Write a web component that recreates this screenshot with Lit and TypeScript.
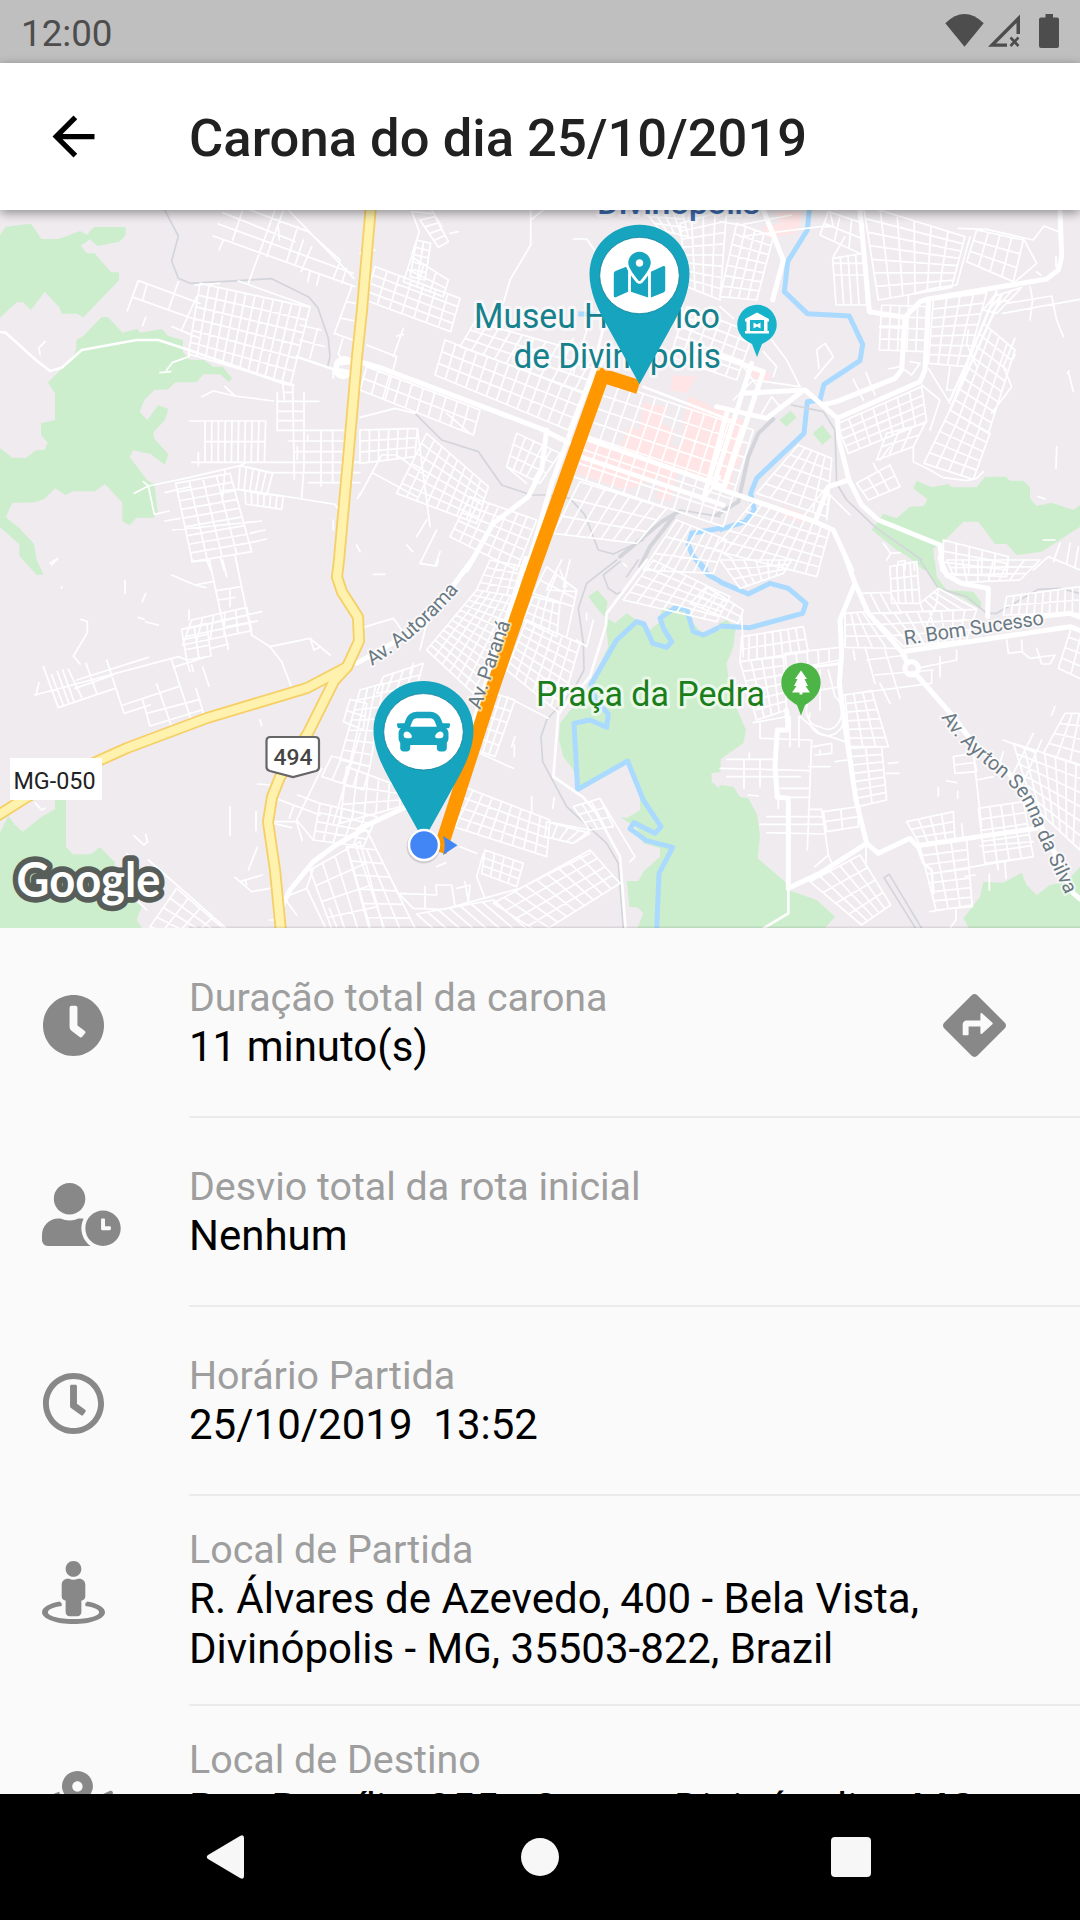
import { LitElement, html, svg, css } from "lit";
import { customElement, property } from "lit/decorators.js";

/** Icon outlines with the viewBox width each was drawn for (height is always 512). */
const ICONS: Record<string, { w: number; d: string }> = {
  clock: {
    w: 512,
    d: "M256,8C119,8,8,119,8,256S119,504,256,504,504,393,504,256,393,8,256,8Zm92.49,313h0l-20,25a16,16,0,0,1-22.49,2.5h0l-67-49.72a40,40,0,0,1-15-31.23V112a16,16,0,0,1,16-16h32a16,16,0,0,1,16,16V256l58,42.5A16,16,0,0,1,348.49,321Z",
  },
  userClock: {
    w: 640,
    d: "M496 224c-79.6 0-144 64.4-144 144s64.4 144 144 144 144-64.4 144-144-64.4-144-144-144zm64 150.3c0 5.3-4.4 9.7-9.7 9.7h-60.6c-5.3 0-9.7-4.4-9.7-9.7v-76.6c0-5.3 4.4-9.7 9.7-9.7h12.6c5.3 0 9.7 4.4 9.7 9.7V352h38.3c5.3 0 9.7 4.4 9.7 9.7v12.6zM320 368c0-27.8 6.7-54.1 18.2-77.5-8-1.5-16.2-2.5-24.6-2.5h-16.7c-22.2 10.2-46.9 16-72.9 16s-50.6-5.8-72.9-16h-16.7C60.2 288 0 348.2 0 422.4V464c0 26.5 21.5 48 48 48h347.1c-45.3-31.9-75.1-84.5-75.1-144zm-96-112c70.7 0 128-57.3 128-128S294.7 0 224 0 96 57.3 96 128s57.3 128 128 128z",
  },
  clockOutline: {
    w: 512,
    d: "M256 8C119 8 8 119 8 256s111 248 248 248 248-111 248-248S393 8 256 8zm0 448c-110.5 0-200-89.5-200-200S145.5 56 256 56s200 89.5 200 200-89.5 200-200 200zm61.8-104.4l-84.9-61.7c-3.1-2.3-4.9-5.9-4.9-9.7V116c0-6.6 5.4-12 12-12h32c6.6 0 12 5.4 12 12v141.7l66.8 48.6c5.4 3.9 6.5 11.4 2.6 16.8L334.6 349c-3.9 5.3-11.4 6.5-16.8 2.6z",
  },
  streetView: {
    w: 512,
    d: "M367.9 329.76c-4.62 5.3-9.78 10.1-15.9 13.65v22.94c66.52 9.34 112 28.05 112 49.65 0 30.93-93.12 56-208 56S48 446.93 48 416c0-21.6 45.48-40.3 112-49.65v-22.94c-6.12-3.55-11.28-8.35-15.9-13.65C58.87 345.34 0 378.05 0 416c0 53.02 114.62 96 256 96s256-42.98 256-96c0-37.95-58.87-70.66-144.1-86.24zM256 128c35.35 0 64-28.65 64-64S291.35 0 256 0s-64 28.65-64 64 28.65 64 64 64zm-64 192v96c0 17.67 14.33 32 32 32h64c17.67 0 32-14.33 32-32v-96c17.67 0 32-14.33 32-32v-96c0-26.51-21.49-48-48-48h-11.8c-11.07 5.03-23.26 8-36.2 8s-25.13-2.97-36.2-8H208c-26.51 0-48 21.49-48 48v96c0 17.67 14.33 32 32 32z",
  },
  mapMarked: {
    w: 576,
    d: "M288 0c-69.59 0-126 56.41-126 126 0 56.26 82.35 158.8 113.9 196.02 6.39 7.54 17.82 7.54 24.2 0C331.65 284.8 414 182.26 414 126 414 56.41 357.59 0 288 0zm0 168c-23.2 0-42-18.8-42-42s18.8-42 42-42 42 18.8 42 42-18.8 42-42 42zM20.12 215.95A32.006 32.006 0 0 0 0 245.66v250.32c0 11.32 11.43 19.06 21.94 14.86L160 448V214.92c-8.84-15.98-16.07-31.54-21.25-46.42L20.12 215.95zM288 359.67c-14.07 0-27.38-6.18-36.51-16.96-19.66-23.2-40.57-49.62-59.49-76.72v182l192 64V266c-18.92 27.09-39.82 53.52-59.49 76.72-9.13 10.77-22.44 16.95-36.51 16.95zm266.06-198.51L416 224v288l139.88-55.95A31.996 31.996 0 0 0 576 426.34V176.02c0-11.32-11.43-19.06-21.94-14.86z",
  },
  directions: {
    w: 512,
    d: "M502.61 233.32L278.68 9.39c-12.52-12.52-32.83-12.52-45.36 0L9.39 233.32c-12.52 12.53-12.52 32.83 0 45.36l223.93 223.93c12.52 12.53 32.83 12.53 45.36 0l223.93-223.93c12.52-12.53 12.52-32.83 0-45.36zm-100.98 12.56l-84.21 77.73c-5.12 4.73-13.43 1.1-13.43-5.88V264h-96v64c0 4.42-3.58 8-8 8h-32c-4.42 0-8-3.58-8-8v-80c0-17.67 14.33-32 32-32h112v-53.73c0-6.97 8.3-10.61 13.43-5.88l84.21 77.73c3.43 3.17 3.43 8.59 0 11.76z",
  },
  car: {
    w: 512,
    d: "M499.99 176h-59.87l-16.64-41.6C406.38 91.63 365.57 64 319.5 64h-127c-46.06 0-86.88 27.63-103.99 70.4L71.87 176H12.01C4.2 176-1.53 183.34.37 190.91l6 24C7.7 220.25 12.5 224 18.01 224h20.07C24.65 235.73 16 252.78 16 272v48c0 16.12 6.16 30.67 16 41.93V416c0 17.67 14.33 32 32 32h32c17.67 0 32-14.33 32-32v-32h256v32c0 17.67 14.33 32 32 32h32c17.67 0 32-14.33 32-32v-54.07c9.84-11.25 16-25.8 16-41.93v-48c0-19.22-8.65-36.27-22.07-48H494c5.51 0 10.31-3.75 11.64-9.09l6-24c1.89-7.57-3.84-14.91-11.65-14.91zm-352.06-17.83c7.29-18.22 24.94-30.17 44.57-30.17h127c19.63 0 37.28 11.95 44.57 30.17L384 208H128l19.93-49.83zM96 319.8c-19.2 0-32-12.76-32-31.9S76.8 256 96 256s48 28.71 48 47.85-28.8 15.95-48 15.95zm320 0c-19.2 0-48 3.19-48-15.95S396.8 256 416 256s32 12.76 32 31.9-12.8 31.9-32 31.9z",
  },
};

/** A block of streets: corners clockwise from top left, then columns and rows. */
type Block = [number, number, number, number, number, number, number, number, number, number];

function blockPath([ax, ay, bx, by, cx, cy, dx, dy, n, m]: Block): string {
  const mix = (p: number, q: number, t: number) => Math.round((p + (q - p) * t) * 10) / 10;
  let out = "";
  for (let i = 0; i <= n; i++) {
    const t = i / n;
    out += `M${mix(ax, bx, t)} ${mix(ay, by, t)}L${mix(dx, cx, t)} ${mix(dy, cy, t)}`;
  }
  for (let j = 0; j <= m; j++) {
    const t = j / m;
    out += `M${mix(ax, dx, t)} ${mix(ay, dy, t)}L${mix(bx, cx, t)} ${mix(by, cy, t)}`;
  }
  return out;
}

interface Tile {
  x: number;
  y: number;
  park?: string;
  pink?: string;
  water?: string;
  rail?: string;
  railWide?: string;
  blocks: Block[];
  minor: string;
  mid?: string;
  major?: string;
}

/** Map tiles; every tile uses three units per screen pixel. */
const TILES: Tile[] = [
  {
    x: 0,
    y: 200,
    park:
      "M0 105L17 80L93 71L124 117H176L240 93L261 104L282 81H377V105L358 125L292 138L270 118L242 137L261 160H284L333 217H357V241L250 352L230 341H186L178 322L134 275L93 330L69 307H50L0 353Z" +
      "M304 352H324L368 398L410 387L422 398L485 387L505 408L549 421V457L570 479L612 480L640 500H668L696 535L687 546L660 523H610L590 547H526L505 568L463 570L433 600L419 636L442 660L475 615L505 627L495 660L460 697L462 715L505 763L495 795L452 762L399 751L389 772L443 842L463 852L473 935L460 953H409L389 976L367 964V908L315 852L285 874H218L197 885L165 865L134 896L105 907L37 909L17 951L58 985L102 1031L110 1080L131 1124H110L58 1067V1033L0 982V744L37 773H79L108 751L134 749L143 728L123 705V670L165 660V580L144 547L187 505L222 463L229 445V420L250 408Z",
    rail: "M494 30L535 108L515 183L535 235L570 250L815 236L925 290L953 322L985 415L990 470L983 500",
    blocks: [
      [600, 250, 930, 322, 872, 552, 565, 462, 12, 6],
      [615, 663, 797, 663, 793, 787, 615, 787, 9, 2],
      [720, 797, 818, 820, 800, 885, 715, 868, 5, 1],
      [735, 870, 850, 890, 845, 928, 737, 912, 6, 1],
      [527, 850, 690, 820, 755, 1055, 577, 1085, 4, 9],
    ],
    minor:
      "M668 38L885 125M655 72L1060 220M640 108L1065 260M750 30L925 95L1020 180M865 30L1062 235M728 30L698 120M825 30L745 250M850 30L800 170M893 80L860 185M910 120L885 195M935 140L903 215M1020 185L1000 235M1040 205L1025 250M670 120L657 150M835 80L838 120M930 215L923 245M958 225L950 255" +
      "M415 242L600 310M400 292L590 360M415 242L382 332M535 245L505 330M440 255L428 300M516 380L600 415M590 290L545 390M715 243L930 320M900 375L963 390M900 420L973 440M953 385L930 475M585 255L660 250M437 352L428 377" +
      "M567 450V470L518 487L500 510M480 518L512 515M120 463L117 443L135 425M605 590L640 573L705 588L820 603M675 560L705 588" +
      "M848 550L853 600M878 555L883 838M832 577V690M912 577V800L905 893M830 604H957M835 634H912M835 662H912M830 691H1045M855 577H880" +
      "M568 663H797M575 787H1080M595 757V797M865 723H1040M885 755H1040M820 818H1080M925 848H1080M963 691V858M998 691V850M923 705V722M892 740V778" +
      "M445 858L570 832L720 797L815 818M403 880L445 858L463 943L507 933M430 845L445 858M720 797L740 787M667 872L715 868L850 888L1005 913L1020 935" +
      "M495 878L570 860M495 963L540 955M517 990L785 963M750 1000L795 990M750 1028L800 1017M620 1080L632 1110M660 1070L672 1110M705 1065L715 1110M675 812L667 900" +
      "M1000 960V990M155 1095L173 1075M1000 505V535M1055 260L1003 400L1058 420M1040 305L1065 310M1025 355L1060 362M1030 410L1015 460L1025 480M1080 1055L1070 1035M1080 880L1073 895",
    mid: "M0 396L17 398L105 478L150 513L185 503L245 450L410 420H475L560 448L850 550L880 555M890 470L1000 508",
    major: "M1010 500A22 18 0 0 1 1055 490M1010 500A22 18 0 0 0 1050 520M1015 490L1050 485M1020 512L1050 518",
  },
  {
    x: 360,
    y: 200,
    pink:
      "M850 608L925 622L905 670L945 690L930 740H960L985 590L1030 605L1080 640L1150 660L1110 880L1040 850L950 815L930 905L890 895L905 830L800 870L650 820L680 710L780 745L805 680L840 690Z" +
      "M940 525L1010 530L980 580L930 570ZM1210 80L1320 60L1310 100L1220 115ZM1170 505L1230 520L1220 545L1165 530Z",
    water: "M1082 985L995 1000L985 1035L1000 1070L1040 1110M655 342H710",
    rail: "M165 640L245 720L355 755L425 855L515 885H560L630 895L675 945L715 1050L760 1062L850 1020M960 930L1080 950",
    railWide: "M955 935L905 965L780 1070M940 950L870 1040L840 1100",
    blocks: [
      [180, 60, 225, 50, 265, 125, 235, 142, 1, 4],
      [170, 120, 212, 130, 195, 240, 150, 230, 2, 5],
      [45, 200, 300, 295, 272, 395, 15, 300, 7, 4],
      [155, 170, 265, 240, 250, 290, 130, 245, 3, 2],
      [255, 420, 670, 580, 625, 690, 225, 525, 13, 3],
      [345, 365, 735, 475, 680, 580, 300, 440, 11, 3],
      [20, 500, 360, 630, 340, 705, 0, 570, 10, 2],
      [0, 690, 172, 685, 165, 770, 0, 790, 6, 3],
      [200, 700, 385, 860, 350, 970, 110, 880, 8, 6],
      [330, 890, 530, 960, 470, 1110, 270, 1010, 7, 5],
      [470, 700, 600, 760, 540, 850, 440, 800, 5, 3],
      [740, 545, 1180, 690, 1090, 980, 640, 830, 12, 7],
      [980, 320, 1180, 400, 1130, 540, 930, 470, 6, 5],
      [660, 845, 920, 925, 830, 1030, 580, 1000, 7, 3],
      [850, 30, 965, 30, 985, 110, 900, 90, 4, 3],
      [960, 70, 1100, 30, 1080, 300, 980, 260, 4, 8],
      [950, 960, 1100, 1020, 1060, 1120, 850, 1110, 7, 3],
    ],
    minor:
      "M155 35L178 95L155 165M215 30L245 80M155 35L215 40M270 100L295 95M130 385L100 470M110 408L130 403M20 435L110 470L75 600M0 652L105 625L165 640M172 685L210 980M40 820L170 890M0 885L65 765L110 765L200 830" +
      "M512 30V135L450 240L430 310M550 30L512 60M640 117H680L710 160M640 415L610 470M690 360L640 520M200 960L170 1010M230 990L180 1090L225 1098L240 1055M140 1035L158 1055M440 800L500 850M260 640L330 700M0 160L45 150",
    mid: "M735 365L700 500M1030 900L1080 830M850 560L1110 660",
    major: "M-10 483L60 503L540 685L640 735M655 768L1090 915M690 720L1090 860M700 510L575 850L500 1110M560 690L545 810L505 890L400 970L320 1110M1100 640L1030 900",
  },
  {
    x: 720,
    y: 200,
    park:
      "M178 660L212 632L230 652L200 680ZM278 700L307 675L335 710L307 735Z" +
      "M580 865L590 842L635 862L685 852L695 862H770L795 830H858L870 842H910L930 862V895L950 918L995 908L1060 930L1080 915V980L965 1055L890 1065L860 1032H825L775 965H730L660 1035L640 1045L645 1110H610L565 1070L530 1050L455 990L490 942L530 955L570 920L612 918L622 898Z",
    pink: "M130 100L180 70L170 35H240V75L170 110ZM85 505L150 525L145 545L90 530ZM190 920L260 945L250 970L185 945ZM-10 620L50 660L70 720L60 790L0 860Z",
    water: "M268 28L262 90L203 185L193 275L262 341L388 348L428 433L420 482L312 553L300 600L262 605L252 700L110 835L92 880L103 930L75 965L-2 990",
    rail: "M215 615L310 635L345 690L350 850L380 900L470 985L620 1090L640 1110",
    railWide: "M-10 945L55 905L85 770L115 700L160 657",
    blocks: [
      [430, 15, 735, 110, 695, 262, 475, 300, 6, 7],
      [325, 35, 430, 70, 430, 165, 300, 105, 3, 2],
      [338, 175, 430, 160, 440, 315, 348, 315, 4, 1],
      [770, 90, 910, 120, 880, 245, 740, 185, 4, 3],
      [640, 300, 800, 278, 740, 500, 625, 490, 4, 7],
      [485, 315, 620, 320, 615, 455, 478, 450, 5, 4],
      [790, 370, 885, 450, 805, 700, 690, 630, 4, 8],
      [690, 630, 810, 700, 760, 838, 612, 790, 4, 5],
      [350, 672, 605, 560, 620, 665, 385, 760, 7, 4],
      [500, 700, 615, 670, 580, 740, 470, 780, 3, 2],
      [410, 850, 510, 795, 540, 860, 445, 900, 3, 2],
      [235, 735, 335, 775, 320, 950, 110, 880, 5, 5],
      [100, 905, 330, 985, 290, 1130, -20, 1050, 9, 5],
      [50, 70, 160, 110, 110, 300, 0, 290, 4, 7],
      [670, 1020, 865, 1070, 860, 1130, 670, 1120, 5, 3],
      [820, 290, 905, 262, 830, 340, 790, 330, 3, 2],
    ],
    minor:
      "M340 190H430M345 225H435M340 170L375 110M0 65L60 75L215 45M60 110L300 80H340L330 35M715 85L800 88L940 120L972 78L1015 95M750 110L710 255L640 265L565 285V320M910 115L950 190L880 250M950 215L962 225" +
      "M848 340L1080 298M860 310L995 288L1010 360L1030 410M930 260L938 300L930 360M885 415L850 500L875 560L815 640M885 465L870 490M690 500L680 570H700M625 505L690 610M605 555L660 600L630 690M745 390L740 430L770 500" +
      "M400 538L430 600M438 518L465 585M580 740V785L620 805L670 833L740 842L770 835L790 815M510 740L480 780M460 790L470 810M330 885L390 945M330 885L320 960M320 860L250 950M290 450L315 430L340 470L285 535M290 450L297 505" +
      "M155 420L200 480L240 560M130 455L170 500L160 530M70 500L120 570M0 320L40 355M40 600L100 540L240 560M155 590L120 650M180 620L155 590M1045 515L1060 575M1042 520L1048 512M1010 740L1008 805M955 890L975 897M970 1020H1005M1008 170V200M940 1110L985 1070L1080 1110M1020 1030L1000 1085M1050 1030L1040 1090M1075 1040L1065 1100" +
      "M490 1030L512 1060L540 1058M512 1060L500 1080M530 1110L535 1085L555 1082V1110M583 1085V1110M10 1060L35 1075M505 507L540 500L575 525L600 490L570 485",
    mid: "M830 275L740 490L690 600M845 285L690 630M480 380H550",
    major:
      "M130 30L190 180L158 300M420 30L448 335L555 352L600 305L625 297L980 237L1015 210L1025 170L1020 30M626 300L615 510L600 545L352 655L255 570L65 580M555 350L545 510L525 535L350 605L305 615M352 655L357 720L387 840L425 915L475 960L660 1035L668 1110M387 840L325 860L285 965M-20 860L285 965L340 990L395 1110M-10 620L140 655L245 575M-10 465L130 515L10 870M95 490L-15 840",
  },
  {
    x: 0,
    y: 560,
    park: "M0 818L25 768L45 795L68 815L125 770L165 748V715H198V860L218 883H272L300 862L345 907L335 960L425 1040L410 1080L430 1110H0Z",
    blocks: [
      [575, 180, 740, 142, 755, 212, 548, 255, 5, 3],
      [545, 208, 620, 190, 633, 288, 560, 300, 2, 3],
      [530, 985, 670, 1105, 600, 1160, 450, 1100, 4, 4],
      [960, 730, 1130, 770, 1090, 860, 940, 840, 5, 4],
      [930, 930, 1080, 845, 1150, 1105, 1000, 1120, 4, 4],
      [1050, 418, 1100, 430, 1090, 510, 1030, 485, 1, 2],
      [995, 588, 1110, 620, 1090, 690, 965, 650, 4, 1],
    ],
    minor:
      "M628 0L685 268M708 0L755 225L810 260L930 235L990 285M810 260L845 305L873 378M930 235L942 270L962 260M785 155L650 185M772 183L680 200M668 0L680 50M515 45L585 75L637 65M585 75L618 83M650 92L722 80M655 120L705 112M690 90V140M575 5L630 0M567 150V180M633 265L685 252" +
      "M105 405L535 290L560 300L570 335M230 360L445 292M175 443L345 385M130 320L175 443M155 345L190 435M172 335L207 430M188 330L222 425M205 328L245 412M258 310L290 400M320 300L372 460L450 435M225 385L340 345M370 435L535 380M515 300L575 485M470 372L515 500M428 420L450 498L605 450M440 460L600 418M588 385L612 465M520 322L620 290" +
      "M243 178L262 185V218L220 288L240 312M375 62V100M437 100L427 125M415 172L432 178M437 186L475 195M608 322L627 378M575 315L580 335M117 368L108 405M690 740V825M768 755V812M772 862L745 930M402 827L432 855L443 845L437 823M705 952L755 995L810 985M720 965L787 945M735 960L740 975M780 480L785 497M105 728L125 750L135 745M185 80V85" +
      "M445 900L690 1115M380 880L400 897M400 1010L440 1050M772 672L815 675M835 718L960 765M1080 520L1000 790M965 625L890 780L940 840M820 785H890L907 842M893 705L960 730M820 790L875 803M850 1010L890 1065M870 1005L920 985L975 1100M920 985L940 925M988 1045L1010 1100M808 1080H825V1065M150 10L165 0M880 740L868 775",
    mid: "",
    major: "M848 1035L870 990L940 905L1000 860L1090 808",
  },
  {
    x: 360,
    y: 560,
    park:
      "M685 110L712 90L743 125L735 170L715 150ZM735 170L765 190L800 160L830 180L870 210L900 185L905 150L960 138L1000 190L1030 225L1082 200V635L1055 640V665L1082 690V1110H830L850 1060L835 1043L808 1040L800 963H835L850 935L900 890V865L850 850L830 805L780 770L800 775L840 750V710L810 640L800 610L655 690L640 630L610 590L597 540L600 490L640 440L690 370L745 260Z",
    water:
      "M1082 200L1030 225L1000 215L980 148L945 143L900 175L912 208L935 245L920 262L878 250L852 192L830 185L770 240L692 375L705 420L745 462L740 502L690 480L642 490L653 688L803 603L850 720L903 800L885 820L822 788L810 806L860 842L938 862L897 940L890 1110M1005 -5L1045 45L1082 65",
    rail: "M770 0L680 70L655 145L670 250L672 330L640 390L560 480L543 530L548 605L620 740L740 850L775 910L790 1105M780 5L730 45L745 85L770 102L785 95M835 0L800 50",
    blocks: [
      [390, 0, 490, 20, 470, 110, 350, 90, 4, 4],
      [350, 90, 470, 110, 340, 400, 200, 270, 6, 12],
      [560, 20, 650, 90, 640, 140, 520, 100, 3, 2],
      [500, 180, 660, 250, 600, 460, 440, 330, 6, 7],
      [520, 110, 600, 130, 590, 230, 490, 180, 4, 3],
      [400, 400, 465, 420, 405, 590, 350, 570, 3, 5],
      [310, 680, 570, 780, 560, 890, 250, 790, 9, 4],
      [375, 870, 490, 910, 470, 980, 365, 940, 4, 3],
      [400, 1030, 690, 870, 780, 970, 540, 1120, 9, 4],
      [-40, 860, 50, 870, 170, 1115, 30, 1115, 3, 6],
      [170, 1062, 400, 1020, 510, 1115, 230, 1115, 7, 1],
      [0, 390, 70, 370, 30, 620, -60, 600, 3, 7],
      [70, 350, 190, 310, 170, 380, 50, 400, 4, 2],
      [-40, 620, 120, 680, 120, 740, -60, 790, 5, 3],
      [640, 740, 720, 715, 760, 800, 690, 810, 3, 3],
      [880, 0, 1110, 110, 1070, 185, 790, 120, 7, 5],
      [560, 785, 690, 820, 640, 850, 555, 830, 4, 1],
    ],
    minor:
      "M440 410L565 475M360 580L460 625M370 880L350 950L375 1015M120 1000L230 1005L228 975H275L285 1040M160 1045L250 1048L480 985L690 880M195 980V1042M20 810L115 1000L160 1045M515 710V755M583 713L578 745M560 785L690 810L640 850M290 985L330 975L325 1030M300 860L350 880M230 920L258 908" +
      "M0 205L100 175L125 210M40 43H75M180 10L230 18L235 0M160 310L150 340M290 400L310 440M465 530L455 560M463 555V590M720 715L825 890L810 905M680 180V160M605 0L560 90L650 95L620 230M800 20L790 10M650 240L680 260L700 180M600 30L620 80M630 0L610 80M180 270L210 150M315 965L325 1025",
    mid: "M860 0L740 160L738 195L690 350L595 460L580 650L670 712L710 760L780 890L797 1110",
    major: "M340 -5L270 90L150 220L-10 310M498 -5L330 520M-5 808L150 735",
  },
  {
    x: 720,
    y: 560,
    park:
      "M-2 190L20 180L47 205L40 260L20 310L30 400L78 510L70 550L-2 600ZM-2 675L40 680L60 710L85 715L112 765L120 830L113 895L195 965L205 990L290 1020L345 1070L310 1110H-2Z" +
      "M730 1075L780 1010L790 965L850 968L905 938L920 975L950 1005L990 975L1040 965L1080 920V1110H750ZM600 0H645L650 50L680 90L760 95L783 125V148L730 115L655 85Z",
    water: "M-2 65L85 102L150 70L205 85L258 130L248 160L90 203L-2 198",
    rail: "M600 0L655 85L740 110L800 160L830 160L955 88L1020 85L1080 100M590 1110L492 953L508 943L608 1110",
    blocks: [
      [65, 230, 250, 200, 265, 275, 60, 305, 8, 2],
      [60, 305, 190, 290, 200, 450, 110, 480, 4, 6],
      [195, 280, 360, 262, 360, 300, 200, 330, 5, 1],
      [310, 755, 415, 740, 415, 800, 320, 815, 2, 2],
      [375, 405, 455, 392, 505, 560, 390, 560, 3, 6],
      [390, 565, 485, 560, 500, 720, 412, 740, 2, 7],
      [510, 20, 590, 5, 600, 130, 515, 130, 4, 3],
      [375, 160, 445, 155, 540, 265, 375, 262, 4, 3],
      [450, 160, 770, 148, 740, 240, 550, 260, 9, 3],
      [420, 100, 510, 97, 545, 160, 450, 160, 3, 1],
      [600, 130, 655, 85, 770, 148, 610, 155, 4, 1],
      [860, 110, 1080, 80, 1080, 160, 850, 165, 10, 2],
      [680, 0, 960, 0, 900, 60, 710, 68, 6, 3],
      [1055, 200, 1120, 220, 1090, 360, 1015, 325, 2, 4],
      [880, 550, 1100, 620, 1080, 870, 940, 740, 7, 6],
      [1035, 460, 1100, 460, 1090, 620, 970, 580, 3, 4],
      [700, 590, 760, 580, 770, 635, 705, 640, 1, 2],
      [775, 745, 910, 725, 940, 890, 795, 910, 4, 5],
      [600, 860, 740, 840, 757, 1040, 648, 1050, 3, 7],
      [270, 965, 420, 885, 512, 1035, 425, 1095, 5, 4],
      [0, 0, 215, 0, 190, 40, 60, 85, 6, 3],
      [-40, 80, 70, 150, 55, 190, -90, 130, 4, 2],
      [560, 785, 700, 755, 705, 845, 600, 855, 4, 3],
    ],
    minor:
      "M65 160L70 290M100 488L200 470M120 490V535L270 540M275 540L262 870M20 598H165M0 625L270 632M20 650H240M72 600V685M120 600V680M88 580V600M180 685H270M180 712H270M140 770H310M120 793H310M140 818L310 822M265 748H305L325 885L285 920M325 885L340 920M438 850V910" +
      "M275 410A40 50 0 0 0 300 500A40 50 0 0 0 345 410M270 460A42 42 0 0 0 370 490M240 470L300 520L375 545M300 330V450M235 400L365 380M325 330L345 410M210 470V560M237 470V560M280 560L335 550V580L285 585M265 620H330M345 605L380 600" +
      "M400 270L405 300M435 260L465 370M495 270L540 415M465 345L640 330M440 300L560 285M370 405L635 370V330M710 270V300L590 325M660 290V350M480 370L510 430M860 240L865 280L905 275L930 295L1005 285L990 312H965L950 265M905 240L907 275" +
      "M760 580L785 800M770 660L820 650M850 540L940 575M640 940L940 890M780 858L940 845M680 663L710 668M655 683V708M713 693V715M85 705L115 708M300 570V585M505 610L535 607M500 640H537M630 1055L755 1035M708 1050V1080L690 1105M808 942V990M830 900L835 930M855 905L858 955M995 465L1005 440M175 715V745M620 195L650 130L655 85M940 520L880 640M965 540L900 690M850 575L830 640M725 790L730 840M765 945L735 950",
    mid: "M205 990V1060L130 1105M590 855L610 910L635 930L640 1000M205 330L365 310",
    major:
      "M378 -5L405 70L445 160L545 275L560 305M590 345L700 470L760 550L860 630L930 730L1000 870L1060 1000L1082 1018M405 70L360 180L365 280L358 370L375 500L408 720L440 850L475 880L570 835L590 857L950 805M545 275L1050 200L1082 212M440 850L300 940L205 985V715L172 712L165 620L172 510H205L200 450M660 -5L680 45L725 70L805 85L803 170M880 178L1050 160L1082 172M575 305A20 20 0 1 1 574.9 305",
  },
];

const HIGHWAYS = [
  "M371 205L362 310L357 357L348 460L339 560L337 577L342 592L358 617L359 641L347 667L334 681L308 733L280 777L272 797L268 822L275 870L281 932",
  "M347 667L307 688L207 718L127 748L67 775L27 797L-3 816",
];

@customElement("app-icon")
export class AppIcon extends LitElement {
  static styles = css`
    :host {
      display: block;
      flex: none;
      height: 63px;
    }
    .glyph {
      display: block;
      height: 63px;
      fill: #888;
    }
  `;
  @property() name = "clock";

  render() {
    const { w, d } = ICONS[this.name];
    return html`<svg class="glyph" viewBox="0 0 ${w} 512" width=${(w * 63) / 512}><path d=${d}></path></svg>`;
  }
}

@customElement("route-map")
export class RouteMap extends LitElement {
  static styles = css`
    :host {
      display: block;
    }
    .map {
      display: block;
      width: 1080px;
      height: 718px;
      font-family: Roboto, "Liberation Sans", sans-serif;
    }
    .ground { fill: #efebef; }
    .park { fill: #cdeecd; }
    .pink { fill: #ffe5e5; }
    .line { fill: none; stroke-linejoin: round; stroke-linecap: round; }
    .water { stroke: #aadaff; stroke-width: 15; stroke-linecap: butt; }
    .rail { stroke: #d3d5db; stroke-width: 5; }
    .rail-wide { stroke: #d3d5db; stroke-width: 12; }
    .street { stroke: #fff; stroke-width: 5.2; }
    .mid { stroke: #fff; stroke-width: 8; }
    .major { stroke: #fff; stroke-width: 15; }
    .hw-edge { stroke: #f6cf65; stroke-width: 12; }
    .hw-fill { stroke: #fff2af; stroke-width: 8.4; }
    .route { stroke: #ff9800; stroke-width: 14; stroke-linejoin: miter; stroke-linecap: butt; }
    .label { paint-order: stroke; stroke: rgba(255, 255, 255, 0.6); stroke-width: 6px; stroke-linejoin: round; }
    .place { font-size: 34.5px; }
    .city { font-size: 34px; font-weight: 500; fill: #3c6bb0; }
    .museum { fill: #15818c; }
    .green { fill: #1a7f1a; }
    .road { font-size: 20px; fill: #6a7983; stroke-width: 4px; }
    .ref { font-size: 24px; fill: #222; }
    .shield-text { font-size: 22.5px; font-weight: 500; fill: #444; }
    .brand {
      font-family: Lato, "Open Sans", sans-serif;
      font-size: 48px;
      font-weight: 700;
      fill: #fff;
      stroke: #575e59;
      stroke-width: 11.5px;
      stroke-linejoin: round;
      paint-order: stroke;
    }
    .pin { fill: #17a4bf; }
    .disc { fill: #fff; stroke: #128299; stroke-width: 0.8; }
  `;

  private tile(t: Tile) {
    return svg`<g transform="translate(${t.x} ${t.y}) scale(0.33333)">
      <path class="line street" d=${t.blocks.map(blockPath).join("") + t.minor}></path>
      <path class="line mid" d=${t.mid ?? ""}></path>
    </g>`;
  }

  private base(t: Tile) {
    return svg`<g transform="translate(${t.x} ${t.y}) scale(0.33333)">
      <path class="park" d=${t.park ?? ""}></path>
      <path class="pink" d=${t.pink ?? ""}></path>
      <path class="line water" d=${t.water ?? ""}></path>
      <path class="line rail" d=${t.rail ?? ""}></path>
      <path class="line rail-wide" d=${t.railWide ?? ""}></path>
    </g>`;
  }

  private pin(x: number, y: number, icon: string, scale: number, dx: number, dy: number) {
    return svg`<g transform="translate(${x} ${y})">
      <path class="pin" d="M0 109.5L-33 50C-42 34 -50 17 -50 -1A50 49 0 0 1 50 -1C50 17 42 34 33 50Z"></path>
      <ellipse class="disc" cx="0" cy="0.8" rx="39.8" ry="38.2"></ellipse>
      <path class="pin" transform="translate(${dx} ${dy}) scale(${scale})" d=${ICONS[icon].d}></path>
    </g>`;
  }

  render() {
    return html`<svg class="map" viewBox="0 210 1080 718">
      <rect class="ground" x="0" y="210" width="1080" height="718"></rect>
      ${TILES.map((t) => this.base(t))} ${TILES.map((t) => this.tile(t))}
      ${TILES.map(
        (t) => svg`<path class="line major" transform="translate(${t.x} ${t.y}) scale(0.33333)" d=${t.major ?? ""}></path>`
      )}
      ${HIGHWAYS.map((d) => svg`<path class="line hw-edge" d=${d}></path>`)}
      ${HIGHWAYS.map((d) => svg`<path class="line hw-fill" d=${d}></path>`)}

      <path class="line route" d="M638.5 387L602.5 375.5L534 567L491 693L439.5 852"></path>

      <text class="label city" x="597" y="214" textLength="163">Divinópolis</text>
      <text class="label place museum" x="474" y="328" textLength="246" lengthAdjust="spacingAndGlyphs">Museu Histórico</text>
      <text class="label place museum" x="513.5" y="368" textLength="207.500" lengthAdjust="spacingAndGlyphs">de Divinópolis</text>
      <text class="label place green" x="536" y="705.7" textLength="229" lengthAdjust="spacingAndGlyphs">Praça da Pedra</text>

      <path id="autorama" fill="none" d="M372 666Q423 634 463 585"></path>
      <path id="parana" fill="none" d="M480 710L511 621"></path>
      <path id="sucesso" fill="none" d="M905 645L1047 624"></path>
      <path id="senna" fill="none" d="M941 717C958 745 980 760 1003 779S1030 818 1037 834L1067 898"></path>
      <text class="label road"><textPath href="#autorama" textLength="116">Av. Autorama</textPath></text>
      <text class="label road"><textPath href="#parana" textLength="92">Av. Paraná</textPath></text>
      <text class="label road"><textPath href="#sucesso" textLength="141">R. Bom Sucesso</textPath></text>
      <text class="label road"><textPath href="#senna" textLength="221">Av. Ayrton Senna da Silva</textPath></text>

      <rect x="10" y="758" width="92" height="42" fill="#fff"></rect>
      <text class="ref" x="13.5" y="789" textLength="82" lengthAdjust="spacingAndGlyphs">MG-050</text>
      <path d="M270.500 737H315Q319 737 319 741V767Q319 770 316 771L293 777L270 771Q266.500 770 266.500 767V741Q266.500 737 270.500 737Z" fill="#fff" stroke="#666" stroke-width="2.200"></path>
      <text class="shield-text" x="273.500" y="764.500" textLength="39" lengthAdjust="spacingAndGlyphs">494</text>
      <text class="brand" x="16.500" y="897" textLength="144" lengthAdjust="spacingAndGlyphs">Google</text>

      <path d="M757 357L752 344Q737.300 337 737.300 324.500A19.700 19.700 0 0 1 776.700 324.500Q776.700 337 762 344Z" fill="#17b3ca"></path>
      <path d="M757 312.500L769 319V321.500H767.500V331H769V333.500H745V331H746.500V321.500H745V319Z" fill="#fff"></path>
      <rect x="750" y="320" width="14" height="11" fill="#17b3ca"></rect>
      <path d="M753.500 322.500L757 324.500L760.500 322.500V328.500L757 326.500L753.500 328.500Z" fill="#fff"></path>

      <path d="M801 715.500L797 705Q781.300 696 781.300 682.500A19.700 19.700 0 0 1 820.700 682.500Q820.700 696 805 705Z" fill="#4db546"></path>
      <path d="M801 670.500L807 679H804.500L808 686H805.500L810 692.500H802.500V694.500H799.500V692.500H792L796.500 686H794L797.500 679H795Z" fill="#fff"></path>

      ${this.pin(639.5, 274.700, "mapMarked", 0.0893, -25.700, -23)}
      ${this.pin(423.500, 731, "car", 0.104, -26.600, -26)}

      <path d="M443 836L457.500 845.300L443 855Q446.500 845.300 443 836Z" fill="#4285f4"></path>
      <circle cx="423.500" cy="846.500" r="17" fill="#000" opacity="0.12"></circle>
      <circle cx="424" cy="845" r="15" fill="#4285f4" stroke="#fff" stroke-width="2.500"></circle>
      <rect x="189" y="926.500" width="891" height="1.500" fill="#000" opacity="0.09"></rect>
    </svg>`;
  }
}

interface Detail {
  icon: string;
  label: string;
  value: string;
  tall?: boolean;
  action?: string;
}

const DETAILS: Detail[] = [
  { icon: "clock", label: "Duração total da carona", value: "11 minuto(s)", action: "directions" },
  { icon: "userClock", label: "Desvio total da rota inicial", value: "Nenhum" },
  { icon: "clockOutline", label: "Horário Partida", value: "25/10/2019  13:52" },
  { icon: "streetView", label: "Local de Partida", value: "R. Álvares de Azevedo, 400 - Bela Vista,\nDivinópolis - MG, 35503-822, Brazil", tall: true },
  { icon: "mapMarked", label: "Local de Destino", value: "Rua Brasília, 355 - Centro, Divinópolis - MG,", tall: true },
];

@customElement("app-root")
export class AppRoot extends LitElement {
  static styles = css`
    :host {
      display: flex;
      flex-direction: column;
      width: 1080px;
      height: 1920px;
      overflow: hidden;
      background: #fafafa;
      font-family: Roboto, "Liberation Sans", sans-serif;
    }
    .status {
      flex: none;
      display: flex;
      justify-content: space-between;
      align-items: center;
      box-sizing: border-box;
      height: 63px;
      padding: 3px 20px 0 21px;
      background: #bfbfbf;
      color: #4d4d4d;
      font-size: 36.75px;
    }
    .signals {
      display: block;
      width: 116px;
      height: 40px;
      fill: #4d4d4d;
    }
    .appbar {
      flex: none;
      display: flex;
      align-items: center;
      gap: 84px;
      height: 147px;
      padding-left: 42px;
      background: #fff;
      box-shadow: 0 3px 10px rgba(0, 0, 0, 0.4);
      z-index: 1;
    }
    .back {
      width: 63px;
      height: 63px;
    }
    .title {
      margin: 0;
      padding-top: 2px;
      font-size: 52.5px;
      font-weight: 500;
      line-height: 62px;
      letter-spacing: 0.04px;
      color: #212121;
      white-space: nowrap;
    }
    .map {
      flex: none;
      height: 718px;
    }
    .details {
      flex: 1;
      min-height: 0;
      box-sizing: border-box;
      padding-top: 1px;
      overflow: hidden;
    }
    .row {
      display: flex;
      align-items: flex-start;
      height: 189px;
    }
    .row.tall {
      height: 210px;
    }
    .lead {
      flex: none;
      box-sizing: border-box;
      width: 189px;
      padding: 65px 0 0 42px;
    }
    .body {
      flex: 1;
      display: flex;
      justify-content: space-between;
      box-sizing: border-box;
      height: 100%;
      border-bottom: 2px solid #ebebeb;
    }
    .texts {
      padding-top: 46px;
    }
    .row.tall .texts {
      padding-top: 31px;
    }
    .label {
      font-size: 39.4px;
      line-height: 45px;
      color: #9e9e9e;
      white-space: pre;
    }
    .value {
      margin-top: 2px;
      font-size: 42px;
      line-height: 50px;
      color: #000;
      white-space: pre;
    }
    .action {
      padding: 65px 74px 0 0;
    }
    .nav {
      flex: none;
      height: 126px;
      background: #000;
    }
    .keys {
      display: block;
      fill: #f7f7f7;
    }
  `;

  render() {
    return html`
      <div class="status">
        <span>12:00</span>
        <svg class="signals" viewBox="944 13 116 40">
          <path d="M945.300 23.200Q964.500 5 983.700 23.200L964.500 46.700Z"></path>
          <path fill-rule="evenodd" d="M988 46.800L1020 14.500V34H1016.500V23L996 43.500H1007V46.800Z"></path>
          <path d="M1010.500 37.500L1018.500 46M1018.500 37.500L1010.500 46" stroke="#4d4d4d" stroke-width="2.600"></path>
          <path d="M1045.500 14H1053V17.500H1057Q1059 17.500 1059 19.500V46Q1059 48 1057 48H1041Q1039 48 1039 46V19.500Q1039 17.500 1041 17.500H1045.500Z"></path>
        </svg>
      </div>
      <header class="appbar">
        <svg class="back" viewBox="0 0 24 24"><path d="M20 11H7.830l5.590-5.590L12 4l-8 8 8 8 1.410-1.410L7.830 13H20v-2z"></path></svg>
        <h1 class="title">Carona do dia 25/10/2019</h1>
      </header>
      <route-map class="map"></route-map>
      <main class="details">
        ${DETAILS.map(
          (d) => html`<section class="row ${d.tall ? "tall" : ""}">
            <div class="lead"><app-icon name=${d.icon}></app-icon></div>
            <div class="body">
              <div class="texts">
                <div class="label">${d.label}</div>
                <div class="value">${d.value}</div>
              </div>
              ${d.action ? html`<div class="action"><app-icon name=${d.action}></app-icon></div>` : ""}
            </div>
          </section>`
        )}
      </main>
      <nav class="nav">
        <svg class="keys" viewBox="0 1794 1080 126" width="1080" height="126">
          <path d="M208 1855Q205.500 1857 208 1859L240 1878Q244 1880 244 1876V1838Q244 1834 240 1836Z"></path>
          <circle cx="540" cy="1857" r="19"></circle>
          <rect x="831" y="1837" width="40" height="40" rx="4"></rect>
        </svg>
      </nav>
    `;
  }
}
